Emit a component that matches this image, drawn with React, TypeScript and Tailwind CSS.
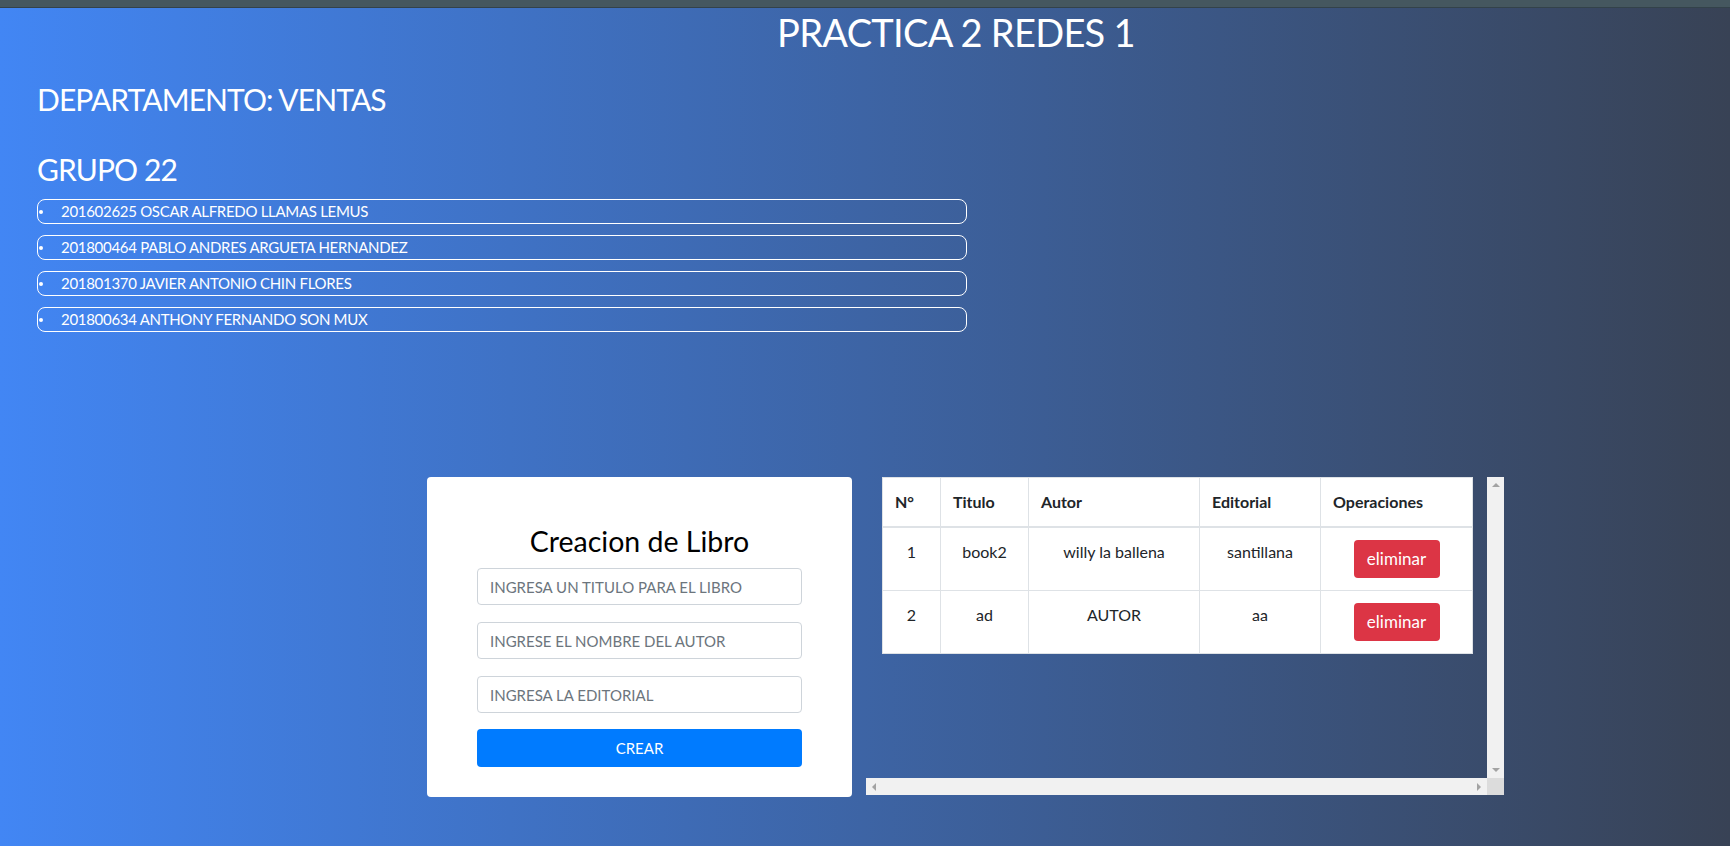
import React from "react";

const integrantes = [
  "201602625 OSCAR ALFREDO LLAMAS LEMUS",
  "201800464 PABLO ANDRES ARGUETA HERNANDEZ",
  "201801370 JAVIER ANTONIO CHIN FLORES",
  "201800634 ANTHONY FERNANDO SON MUX",
];

const libros = [
  { id: 1, titulo: "book2", autor: "willy la ballena", editorial: "santillana" },
  { id: 2, titulo: "ad", autor: "AUTOR", editorial: "aa" },
];

const CrearLibro = () => {
  return (
    <div className="w-[425px] h-[320px] bg-white rounded-[4px] flex flex-col items-center pt-[47px]">
      <h3 className="text-[28.5px] leading-[34px] text-black mb-[10px]">Creacion de Libro</h3>
      <div className="flex flex-col gap-[17px]">
        <input
          className="w-[325px] h-[37px] border border-[#ced4da] rounded-[4px] px-[12px] text-[15px] text-[#495057] placeholder:text-[#6c757d] outline-none"
          placeholder="INGRESA UN TITULO PARA EL LIBRO"
        />
        <input
          className="w-[325px] h-[37px] border border-[#ced4da] rounded-[4px] px-[12px] text-[15px] text-[#495057] placeholder:text-[#6c757d] outline-none"
          placeholder="INGRESE EL NOMBRE DEL AUTOR"
        />
        <input
          className="w-[325px] h-[37px] border border-[#ced4da] rounded-[4px] px-[12px] text-[15px] text-[#495057] placeholder:text-[#6c757d] outline-none"
          placeholder="INGRESA LA EDITORIAL"
        />
      </div>
      <button className="mt-[16px] w-[325px] h-[38px] bg-[#007bff] rounded-[4px] text-white text-[15px]">
        CREAR
      </button>
    </div>
  );
};

const TablaLibros = () => {
  return (
    <div className="w-[638px] h-[318px] grid grid-cols-[621px_17px] grid-rows-[301px_17px]">
      <div className="pl-[16px] overflow-hidden">
        <table className="w-[590px] table-fixed border-collapse bg-white text-[#212529]">
          <thead>
            <tr>
              <th className="w-[58px] text-left font-bold text-[16px] leading-[24px] p-[12px] border border-[#dee2e6] border-b-2">N°</th>
              <th className="w-[88px] text-left font-bold text-[16px] leading-[24px] p-[12px] border border-[#dee2e6] border-b-2">Titulo</th>
              <th className="w-[171px] text-left font-bold text-[16px] leading-[24px] p-[12px] border border-[#dee2e6] border-b-2">Autor</th>
              <th className="w-[121px] text-left font-bold text-[16px] leading-[24px] p-[12px] border border-[#dee2e6] border-b-2">Editorial</th>
              <th className="w-[152px] text-left font-bold text-[16px] leading-[24px] p-[12px] border border-[#dee2e6] border-b-2">Operaciones</th>
            </tr>
          </thead>
          <tbody>
            {libros.map((libro) => (
              <tr key={libro.id}>
                <td className="text-center align-top text-[16px] leading-[24px] p-[12px] border border-[#dee2e6]">{libro.id}</td>
                <td className="text-center align-top text-[16px] leading-[24px] p-[12px] border border-[#dee2e6]">{libro.titulo}</td>
                <td className="text-center align-top text-[16px] leading-[24px] p-[12px] border border-[#dee2e6]">{libro.autor}</td>
                <td className="text-center align-top text-[16px] leading-[24px] p-[12px] border border-[#dee2e6]">{libro.editorial}</td>
                <td className="text-center align-top p-[12px] border border-[#dee2e6]">
                  <button className="w-[86px] h-[38px] bg-[#dc3545] rounded-[4px] text-white text-[17px]">eliminar</button>
                </td>
              </tr>
            ))}
          </tbody>
        </table>
      </div>
      {/* barra vertical */}
      <div className="bg-[#f1f1f1] flex flex-col justify-between items-center py-[6px]">
        <div className="w-0 h-0 border-l-[4px] border-r-[4px] border-b-[4px] border-l-transparent border-r-transparent border-b-[#a3a3a3]" />
        <div className="w-0 h-0 border-l-[4px] border-r-[4px] border-t-[4px] border-l-transparent border-r-transparent border-t-[#a3a3a3]" />
      </div>
      {/* barra horizontal */}
      <div className="bg-[#f1f1f1] flex justify-between items-center px-[6px]">
        <div className="w-0 h-0 border-t-[4px] border-b-[4px] border-r-[4px] border-t-transparent border-b-transparent border-r-[#a3a3a3]" />
        <div className="w-0 h-0 border-t-[4px] border-b-[4px] border-l-[4px] border-t-transparent border-b-transparent border-l-[#a3a3a3]" />
      </div>
      <div className="bg-[#dcdcdc]" />
    </div>
  );
};

export default function App() {
  return (
    <div className="w-full h-[846px] overflow-hidden bg-[linear-gradient(to_right,#4286f4,#384255)] text-white font-['Trebuchet_MS',Lato,sans-serif]">
      <div className="h-[8px] bg-[#45575f] border-b border-[#33424a]" />
      <h1 className="pl-[182px] text-center text-[38px] leading-[48px] tracking-[-0.7px]">PRACTICA 2 REDES 1</h1>
      <div className="px-[37px]">
        <h2 className="mt-[24px] text-[30px] leading-[38px] tracking-[-0.9px]">DEPARTAMENTO: VENTAS</h2>
        <h2 className="mt-[32px] text-[30px] leading-[38px] tracking-[-0.9px]">GRUPO 22</h2>
        <ul className="mt-[11px] w-[930px] flex flex-col gap-[11px]">
          {integrantes.map((nombre) => (
            <li key={nombre} className="h-[25px] flex items-center border border-white rounded-[8px] text-[15px] tracking-[-0.3px]">
              <span className="ml-[1px] w-[4px] h-[4px] rounded-full bg-white" />
              <span className="ml-[18px]">{nombre}</span>
            </li>
          ))}
        </ul>
      </div>
      <div className="mt-[145px] ml-[427px] flex gap-[14px]">
        <CrearLibro />
        <TablaLibros />
      </div>
    </div>
  );
}
